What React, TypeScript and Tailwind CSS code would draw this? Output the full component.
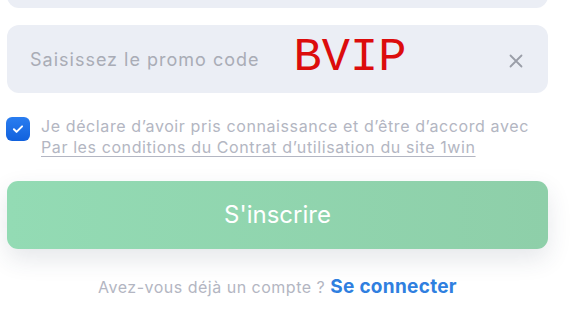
import React from 'react';

// ── Promo / signup footer ────────────────────────────────────────────────────
const FONT = { fontFamily: 'Inter, "Liberation Sans", Arial, sans-serif' };

const Check: React.FC = () => (
    <svg viewBox="0 0 24 24" className="w-[14px] h-[14px]" fill="none" stroke="white" strokeWidth={3.4} strokeLinecap="round" strokeLinejoin="round">
        <path d="M5 12.5l4.5 4.5L19 7.5" />
    </svg>
);

export default function App() {
    return (
        <div className="w-[570px] h-[320px] bg-white overflow-hidden" style={FONT}>
            <div className="pl-[7px] pr-[22px] flex flex-col">
                {/* previous field, mostly scrolled off */}
                <div className="h-[68px] -mt-[60px] rounded-[12px] bg-[#ebeef5]" />

                {/* promo code */}
                <div className="mt-[17px] h-[68px] rounded-[12px] bg-[#ebeef5] flex items-center pl-[23px] pr-[24px]">
                    <span className="text-[18px] tracking-[1px] text-[#a9acb6] mt-[1px]">Saisissez le promo code</span>
                    <span
                        className="ml-[34px] text-[47px] leading-none text-[#dc0c0c] -mt-[4px]"
                        style={{ fontFamily: '"Liberation Mono", monospace' }}
                    >
                        BVIP
                    </span>
                    <svg viewBox="0 0 16 16" className="ml-auto w-[16px] h-[16px] mt-[3px]" stroke="#9a9ea8" strokeWidth={1.8} strokeLinecap="round">
                        <path d="M2.5 2.5l11 11M13.5 2.5l-11 11" />
                    </svg>
                </div>

                {/* agreement */}
                <div className="mt-[24px] flex items-start gap-[11px]">
                    <div className="w-[24px] h-[24px] shrink-0 rounded-[6px] bg-gradient-to-b from-[#2a7df0] to-[#1161dd] flex items-center justify-center -ml-[1px]">
                        <Check />
                    </div>
                    <div className="text-[16px] tracking-[0.6px] leading-[21px] text-[#b3b6c2] -mt-[1px]">
                        <div>Je déclare d’avoir pris connaissance et d’être d’accord avec</div>
                        <div className="underline decoration-[#b3b6c2] underline-offset-[3px]">Par les conditions du Contrat d’utilisation du site 1win</div>
                    </div>
                </div>

                {/* submit */}
                <button className="mt-[23px] h-[68px] rounded-[11px] bg-gradient-to-r from-[#93dbb4] to-[#8ecfa9] text-white text-[24px] shadow-[0_10px_24px_rgba(40,60,80,0.12)]">
                    S'inscrire
                </button>

                {/* login */}
                <div className="mt-[24px] text-center text-[16px] tracking-[0.5px] text-[#b3b6c2]">
                    Avez-vous déjà un compte ?{' '}
                    <span className="text-[19px] tracking-[0.3px] font-bold text-[#2f7fe0]">Se connecter</span>
                </div>
            </div>
        </div>
    );
}
